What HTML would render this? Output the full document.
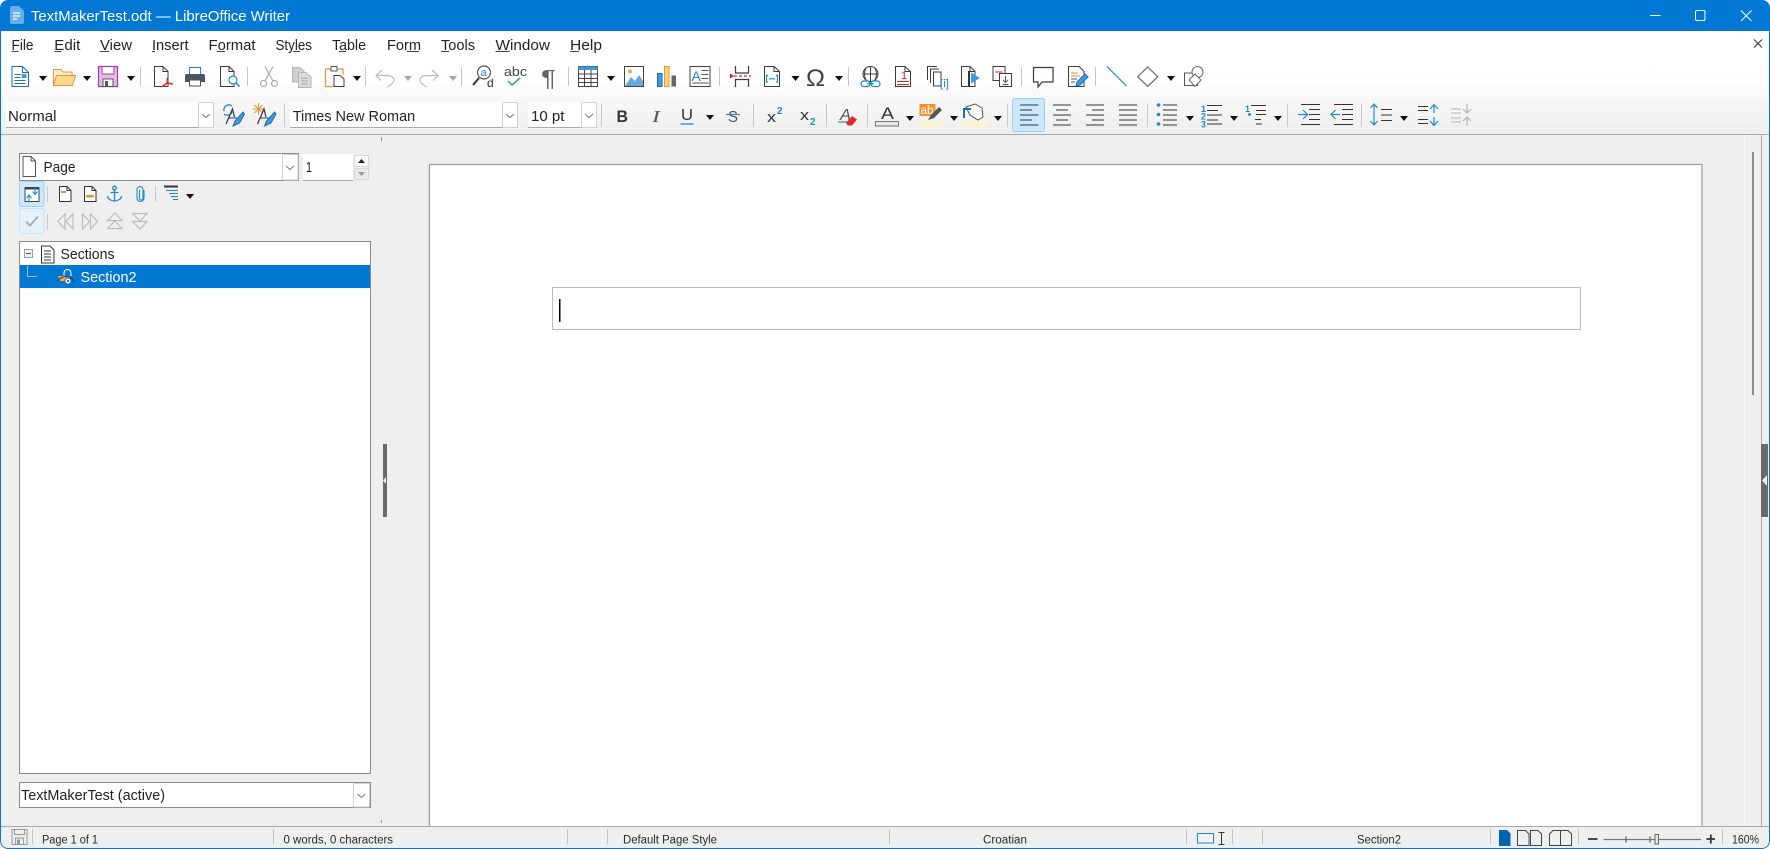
<!DOCTYPE html>
<html lang="en"><head><meta charset="utf-8"><title>TextMakerTest.odt — LibreOffice Writer</title>
<style>
html,body{margin:0;padding:0;background:#fff;width:1770px;height:849px;overflow:hidden}
svg{display:block}
text{font-family:"Liberation Sans",sans-serif;font-size:15px;fill:#222;white-space:pre}
.s{font-size:11.5px;fill:#2a2a2a}
.m{fill:#222}
.k{fill:none;stroke:#3c3c3c;stroke-width:1}
.g{fill:none;stroke:#ababab;stroke-width:1}
.b{fill:none;stroke:#1e8bcd;stroke-width:1}
.l{fill:none;stroke:#333;stroke-width:1.2}
.sep{stroke:#c8c8c8;stroke-width:1}
</style></head><body>
<svg width="1770" height="849" viewBox="0 0 1770 849" xmlns="http://www.w3.org/2000/svg">
<defs>
<linearGradient id="tb" x1="0" y1="0" x2="0" y2="1"><stop offset="0" stop-color="#fff"/><stop offset=".3" stop-color="#fefefe"/><stop offset="1" stop-color="#eeeeee"/></linearGradient>
<clipPath id="win"><rect x="0" y="0" width="1770" height="849" rx="8"/></clipPath>
<polygon id="a" points="-4,0 4,0 0,5" fill="#111"/>
<polygon id="ad" points="-4,0 4,0 0,5" fill="#a8a8a8"/>
<g id="dd"><rect x=".5" y=".5" width="15" height="25" rx="1" fill="#fff" stroke="#d2d2d2"/><path d="M4 12l4 3.5 4-3.5" fill="none" stroke="#777"/></g>
</defs>
<g clip-path="url(#win)">
<rect width="1770" height="849" fill="#efefef"/>
<rect width="1770" height="31" fill="#0078d4"/>
<rect y="31" width="1770" height="28" fill="#fff"/>
<rect y="58" width="1770" height="76" fill="url(#tb)"/>
<rect y="134" width="1770" height="1" fill="#a9a9a9"/>

<!-- title -->
<path d="M10 8a2 2 0 0 1 2-2h7l5 5v11a2 2 0 0 1-2 2H12a2 2 0 0 1-2-2Z" fill="#cfe4f7" opacity=".5"/>
<path d="M13 13h7M13 16h7M13 19h4" stroke="#fff" stroke-width="1.2"/>
<text x="31" y="21" style="fill:#fff" textLength="259" lengthAdjust="spacingAndGlyphs">TextMakerTest.odt — LibreOffice Writer</text>
<path d="M1650 15.5h10.5" stroke="#fff" stroke-width="1"/>
<rect x="1695.5" y="10.5" width="9.5" height="10" rx="1.5" fill="none" stroke="#fff"/>
<path d="M1741 10.5l10.5 10.5M1751.5 10.5l-10.5 10.5" stroke="#fff" stroke-width="1"/>

<!-- menu -->
<g class="m">
<text x="11.5" y="50" textLength="22" lengthAdjust="spacingAndGlyphs">File</text>
<text x="54.3" y="50" textLength="26" lengthAdjust="spacingAndGlyphs">Edit</text>
<text x="100" y="50" textLength="32" lengthAdjust="spacingAndGlyphs">View</text>
<text x="152" y="50" textLength="36.5" lengthAdjust="spacingAndGlyphs">Insert</text>
<text x="208.5" y="50" textLength="47" lengthAdjust="spacingAndGlyphs">Format</text>
<text x="275.5" y="50" textLength="36.5" lengthAdjust="spacingAndGlyphs">Styles</text>
<text x="332" y="50" textLength="34" lengthAdjust="spacingAndGlyphs">Table</text>
<text x="387" y="50" textLength="34" lengthAdjust="spacingAndGlyphs">Form</text>
<text x="441" y="50" textLength="34" lengthAdjust="spacingAndGlyphs">Tools</text>
<text x="495.5" y="50" textLength="54.5" lengthAdjust="spacingAndGlyphs">Window</text>
<text x="570" y="50" textLength="32" lengthAdjust="spacingAndGlyphs">Help</text>
</g>
<path d="M11.5 51.5h7M54.5 51.5h7M100 51.5h9M152 51.5h3M217 51.5h8M293 51.5h7M339 51.5h7M407 51.5h12M441 51.5h8M495.5 51.5h14M570 51.5h9" stroke="#444" stroke-width="1"/>
<path d="M1754 39.5l8 8M1762 39.5l-8 8" stroke="#333" stroke-width="1.1"/>

<!-- toolbar 1 -->
<g transform="translate(11.5,66)"><path d="M.5.5H11L17 6.5V20.5H.5Z" fill="#fff" stroke="#1f6db3"/><path d="M11 .5V6.5H17" fill="none" stroke="#1f6db3"/><path d="M3 8.5h6M3 11.5h6M3 14.5h11M3 17.5h11" stroke="#1f6db3"/><rect x="10" y="8" width="5" height="4" fill="#4a9bd8"/></g>
<use href="#a" x="43" y="76"/>
<g transform="translate(53,67)"><path d="M.5 18.5V2.5H8L10 5H19V9" stroke="#f0923b" fill="#fdeec8"/><path d="M.5 18.5L3.500 8.500H22.500L19.500 18.500Z" fill="#fbd98f" stroke="#f0923b"/></g>
<use href="#a" x="87" y="76"/>
<g transform="translate(98,66)"><path d="M.5.5H19.5V20.5H.5Z" fill="#e6bce6" stroke="#a33ea3" stroke-width="1.2"/><rect x="4" y=".5" width="12" height="7.5" fill="#fff" stroke="#a33ea3"/><rect x="5" y="13" width="10" height="7.500" fill="#fff" stroke="#555"/><rect x="7" y="15" width="3" height="5" fill="#555"/></g>
<use href="#a" x="131" y="76"/>
<path class="sep" d="M140.500 67v19"/>
<g transform="translate(154,66)"><path d="M.5.5H9L14 5.500V20.500H.5Z" class="k" style="fill:#fff"/><path d="M9 .5V5.500H14" class="k"/><path d="M13 12c1 5-2 8-5 8.500 3-3 7-4 11-2.500-4 .5-6-2-6-6Z" fill="none" stroke="#dd3333" stroke-width="1.200"/></g>
<g transform="translate(185,67)"><rect x="4.500" y=".5" width="11" height="7" fill="#fff" stroke="#1e8bcd"/><path d="M2 7H18a2 2 0 0 1 2 2V15H16V13H4V15H0V9a2 2 0 0 1 2-2Z" fill="#4b5560"/><rect x="4.500" y="13" width="11" height="6" fill="#fff" stroke="#4b5560"/></g>
<g transform="translate(220,66)"><path d="M.5.5H9L14 5.500V20.500H.5Z" class="k"/><path d="M9 .5V5.500H14" class="k"/><circle cx="13" cy="14" r="4" fill="#fff" stroke="#1e8bcd" stroke-width="1.200"/><path d="M16 17l3.500 3.500" stroke="#1e8bcd" stroke-width="1.500"/></g>
<path class="sep" d="M247.500 67v19"/>
<g transform="translate(260,66)" class="g" style="stroke-width:1.200"><circle cx="3.500" cy="17.500" r="3"/><circle cx="14.500" cy="17.500" r="3"/><path d="M5 15L13 .5M13 15L5 .5"/></g>
<g transform="translate(292,67)"><path d="M.5.5H8L12 4V15H.5Z" fill="#cfcfcf" stroke="#b5b5b5"/><path d="M6.500 5.500H14L19 10V20.500H6.500Z" fill="#dcdcdc" stroke="#b5b5b5"/><path d="M9 11h7M9 14h7M9 17h7" stroke="#aaa"/></g>
<g transform="translate(325,66)"><path d="M.5 3H18V9" fill="none" stroke="#f0923b" stroke-width="1.200"/><path d="M.5 3V20.500H8" fill="none" stroke="#f0923b" stroke-width="1.200"/><rect x="6" y=".5" width="6" height="4.500" fill="#fff" stroke="#555"/><path d="M9 9.500H15L19 13V20.500H9Z" class="k" style="fill:#fff"/></g>
<use href="#a" x="357" y="76"/>
<path class="sep" d="M365.500 67v19"/>
<path d="M382 70l-6 5.500 5 5M377 75.500H387c4 0 7 2 7 4.500 0 3-3 5-7 7" fill="none" stroke="#bdbdbd" stroke-width="1.200"/>
<use href="#ad" x="408" y="76"/>
<path d="M432 70l6 5.500-5 5M437 75.500H427c-4 0-7 2-7 4.500 0 3 3 5 7 7" fill="none" stroke="#bdbdbd" stroke-width="1.200"/>
<use href="#ad" x="453" y="76"/>
<path class="sep" d="M461.500 67v19"/>
<circle cx="484" cy="72.500" r="6.500" fill="#fff" stroke="#555" stroke-width="1.200"/>
<path d="M479 78l-6 7" stroke="#333" stroke-width="2"/>
<text x="480.500" y="76" style="font-size:11px;fill:#1e8bcd">a</text>
<text x="487" y="87" style="font-size:12px;fill:#333">d</text>
<text x="504" y="76" style="font-size:13px;fill:#444" textLength="23" lengthAdjust="spacingAndGlyphs">abc</text>
<path d="M508 81l4 4 8-7" fill="none" stroke="#3cb371" stroke-width="1.600"/>
<text x="541" y="86" style="font-size:23px;fill:#666" textLength="15" lengthAdjust="spacingAndGlyphs">¶</text>
<path class="sep" d="M568.500 67v19"/>
<g transform="translate(578,66)"><rect x=".5" y=".5" width="19" height="20" fill="#fff" stroke="#444"/><rect x=".5" y=".5" width="19" height="3.500" fill="#3f9be0"/><path d="M.5 8h19M.5 12.500h19M.5 16.500h19M6.500 4v16M13 4v16" stroke="#444"/></g>
<use href="#a" x="611" y="76"/>
<g transform="translate(624,66)"><rect x=".5" y=".5" width="19" height="20" fill="#fff" stroke="#444"/><path d="M1 20L7 11l4 4 4-6 4 6v5Z" fill="#6aa9e0"/><circle cx="6" cy="5.500" r="2" fill="#f5a54a"/></g>
<g transform="translate(657,66)"><rect x=".5" y="7.500" width="4.500" height="13" fill="#3f9be0" stroke="#1f6db3"/><rect x="7.500" y=".5" width="4.500" height="20" fill="#fcd77f" stroke="#f0923b"/><rect x="14.500" y="9.500" width="4.500" height="11" fill="#666"/></g>
<g transform="translate(689.500,66)"><rect x=".5" y=".5" width="20" height="20" fill="#fff" stroke="#444"/><text x="2" y="15" style="font-size:14px;fill:#1e8bcd">A</text><path d="M12 4.500h7M12 8.500h7M12 12.500h7M3 17h16" stroke="#555"/></g>
<path class="sep" d="M719.500 67v19"/>
<g transform="translate(730,66)"><path d="M5.500 0V7H18.500V0M5.500 21V13.500H18.500V21" class="k" style="stroke-width:1.200"/><path d="M4 10H21" stroke="#d22" stroke-dasharray="3 2" stroke-width="1.200"/><path d="M0 7.500L4 10 0 12.500Z" fill="#d22"/></g>
<g transform="translate(764,66)"><path d="M.5.5H10L15.500 5.500V20.500H.5Z" class="k"/><path d="M10 .5V5.500H15.500" class="k"/><path d="M4 9.500H2.500V16H4M12 9.500H13.500V16H12M5 12.800H11" class="b" style="stroke-width:1.200"/></g>
<use href="#a" x="795.500" y="76"/>
<text x="806" y="86" style="font-size:24px;fill:#444" textLength="19" lengthAdjust="spacingAndGlyphs">Ω</text>
<use href="#a" x="839" y="76"/>
<path class="sep" d="M848.500 67v19"/>
<g transform="translate(860,66)"><circle cx="10.500" cy="8" r="7.500" class="k"/><path d="M3 8h15M10.500.5v15M6 2c-2 4-2 8 0 12M15 2c2 4 2 8 0 12" class="k"/><rect x="1" y="15" width="9" height="5.500" rx="2.700" fill="#fff" stroke="#1e8bcd" stroke-width="1.200"/><rect x="11" y="15" width="9" height="5.500" rx="2.700" fill="#fff" stroke="#1e8bcd" stroke-width="1.200"/><path d="M7 17.700h7" stroke="#1e8bcd" stroke-width="1.200"/></g>
<g transform="translate(895,66)"><path d="M.5.5H10L15.500 5.500V20.500H.5Z" class="k"/><path d="M10 .5V5.500H15.500" class="k"/><text x="6" y="13" style="font-size:11px;fill:#d22">1</text><path d="M2 15.500H14M2 18.500H14" stroke="#d22"/></g>
<g transform="translate(927,66)"><path d="M.5 14V.5H10" class="k"/><path d="M3.500 17V3H12" class="k"/><path d="M6.500 20V6H14V20Z" fill="#fff" stroke="#3c3c3c"/><text x="13" y="21" style="font-size:11px;fill:#1e8bcd" textLength="9" lengthAdjust="spacingAndGlyphs">[i]</text></g>
<g transform="translate(961,66)"><path d="M.5.5H9L14 5.500V20.500H.5Z" class="k"/><path d="M9 .5V5.500H14" class="k"/><rect x="7" y="5" width="2" height="16" fill="#333"/><path d="M10 6.500L19 12l-9 5.500Z" fill="#3f9be0"/></g>
<g transform="translate(992.500,66)"><rect x=".5" y=".5" width="12" height="14" fill="#fff" stroke="#3c3c3c"/><rect x="7" y="7.500" width="12" height="13" fill="#fff" stroke="#3c3c3c"/><path d="M2.500 6H10" stroke="#d22"/><path d="M13 10v6M10.500 14l2.500 2.500 2.500-2.500" fill="none" stroke="#555"/><path d="M10 18.500h6" stroke="#d22"/></g>
<path class="sep" d="M1021.500 67v19"/>
<path d="M1033.500 67.500H1053V82H1042L1038 87V82H1033.500Z" class="k" style="stroke-width:1.200"/>
<g transform="translate(1068,66)"><path d="M.5.5H11L16 5.500V20.500H.5Z" class="k"/><path d="M3 7h7M3 10h9" stroke="#f0923b"/><path d="M3 13h6M3 16h4" stroke="#555"/><path d="M8 20l1-4 8-8 3 3-8 8Z" fill="#3f9be0" stroke="#1f6db3"/></g>
<path class="sep" d="M1095.500 67v19"/>
<path d="M1107 66.500L1126.500 86" stroke="#1e8bcd" stroke-width="1.200"/>
<path d="M1147.700 67l10 9.700-10 9.700-10-9.700Z" fill="none" stroke="#666" stroke-width="1.200"/>
<use href="#a" x="1171" y="76"/>
<g transform="translate(1184,66)"><rect x=".5" y="7" width="13" height="12.500" fill="#fff" stroke="#555"/><circle cx="13.500" cy="6" r="5.500" fill="#fff" stroke="#666"/><path d="M11 8l6 6-6 6.500-6-6.500Z" fill="#fff" stroke="#666"/></g>

<!-- toolbar 2 -->
<rect x="6" y="102" width="207" height="26" fill="#fff"/><path d="M6 127.500H213" stroke="#aaa"/>
<use href="#dd" x="198" y="102"/>
<text x="8" y="121" textLength="48.500" lengthAdjust="spacingAndGlyphs">Normal</text>
<g transform="translate(221,102)"><path d="M3 9a5 5 0 0 1 8-5M11 10a5 5 0 0 1-8 2" fill="none" stroke="#1e8bcd" stroke-width="1.300"/><path d="M5 22L11.500 7l2 8" class="k" style="stroke-width:1.300"/><path d="M8 16h8" class="k"/><path d="M12 24l2-5 8-9 1.500 2-5 9Z" fill="#3f9be0" stroke="#1f6db3"/></g>
<g transform="translate(252.500,102)"><path d="M2 3l8 8M10 3l-8 8M6 1v12M0 7h12" stroke="#f0923b"/><path d="M5 22L11.500 7l2 8" class="k" style="stroke-width:1.300"/><path d="M8 16h8" class="k"/><path d="M12 24l2-5 8-9 1.500 2-5 9Z" fill="#3f9be0" stroke="#1f6db3"/></g>
<path class="sep" d="M284.500 104v23"/>
<rect x="290" y="102" width="228" height="26" fill="#fff"/><path d="M290 127.500H518" stroke="#aaa"/>
<use href="#dd" x="502" y="102"/>
<text x="292.700" y="121" textLength="122.500" lengthAdjust="spacingAndGlyphs">Times New Roman</text>
<rect x="528" y="102" width="69" height="26" fill="#fff"/><path d="M528 127.500H597" stroke="#aaa"/>
<use href="#dd" x="581" y="102"/>
<text x="531" y="121" textLength="33.500" lengthAdjust="spacingAndGlyphs">10 pt</text>
<path class="sep" d="M601.500 104v23"/>
<text x="616.500" y="122" style="font-size:17px;font-weight:bold;fill:#333" textLength="11.500" lengthAdjust="spacingAndGlyphs">B</text>
<text x="652" y="122" style="font-size:17px;font-style:italic;font-family:'Liberation Serif',serif;fill:#555" textLength="8" lengthAdjust="spacingAndGlyphs">I</text>
<text x="681" y="120" style="font-size:16px;fill:#333" textLength="12" lengthAdjust="spacingAndGlyphs">U</text>
<path d="M680.500 124h13" stroke="#1e8bcd" stroke-width="1.300"/>
<use href="#a" x="710" y="115"/>
<text x="728" y="122" style="font-size:16px;fill:#555" textLength="10" lengthAdjust="spacingAndGlyphs">S</text>
<path d="M726 114.500h14" stroke="#1e8bcd" stroke-width="1.200"/>
<path class="sep" d="M753.500 104v23"/>
<text x="767" y="122" style="font-size:15px;fill:#333" textLength="9" lengthAdjust="spacingAndGlyphs">x</text>
<text x="777" y="114" style="font-size:10px;font-weight:bold;fill:#1e8bcd">2</text>
<text x="800" y="120" style="font-size:15px;fill:#333" textLength="9" lengthAdjust="spacingAndGlyphs">x</text>
<text x="810" y="125" style="font-size:10px;font-weight:bold;fill:#1e8bcd">2</text>
<path class="sep" d="M826.500 104v23"/>
<text x="840" y="120" style="font-size:16px;font-style:italic;fill:#555" textLength="11" lengthAdjust="spacingAndGlyphs">A</text>
<path d="M838 122h9" stroke="#1e8bcd" stroke-width="1.200"/>
<path d="M846 123l6-7 5 3.500-5 6h-4Z" fill="#e02b2b"/>
<path class="sep" d="M867.500 104v23"/>
<text x="881" y="119" style="font-size:17px;fill:#333" textLength="13" lengthAdjust="spacingAndGlyphs">A</text>
<rect x="875.500" y="121.500" width="23" height="4.500" fill="#e8e8e8" stroke="#777"/>
<use href="#a" x="910" y="116"/>
<rect x="919.500" y="104" width="16" height="12" fill="#f7922e"/>
<text x="920.500" y="114" style="font-size:11.500px;fill:#fff" textLength="13" lengthAdjust="spacingAndGlyphs">ab</text>
<rect x="919" y="121" width="24" height="6" fill="#faf6cf"/>
<path d="M928 120l3-5 8-8 3 3-8 8Z" fill="#555"/>
<use href="#a" x="954" y="116"/>
<rect x="963" y="121" width="24" height="6" fill="#faf6cf"/>
<path d="M966 107l9-3 7 4 1 9-5 3-8-5Z" fill="#fff" stroke="#555"/>
<path d="M964 118V109h7" fill="none" stroke="#1f6db3" stroke-width="2"/>
<use href="#a" x="998" y="116"/>
<path class="sep" d="M1007.500 104v23"/>
<rect x="1012.500" y="98.500" width="32" height="33" rx="2" fill="#cce8ff" stroke="#99d1ff"/>
<path d="M1020 105h18.500M1020 110h12M1020 115h18.500M1020 120h12M1020 125h18.500" stroke="#333" stroke-width="1.100"/>
<path d="M1053 105h18M1056 110h12M1053 115h18M1056 120h12M1053 125h18" stroke="#333" stroke-width="1.100"/>
<path d="M1086 105h18M1092 110h12M1086 115h18M1092 120h12M1086 125h18" stroke="#333" stroke-width="1.100"/>
<path d="M1119 105h18M1119 110h18M1119 115h18M1119 120h18M1119 125h18" stroke="#333" stroke-width="1.100"/>
<path class="sep" d="M1147.500 104v23"/>
<path d="M1163 105h14M1163 110h14M1163 115h14M1163 120h14M1163 125h14" stroke="#333" stroke-width="1.100"/>
<circle cx="1158.500" cy="105" r="1.800" fill="#1e8bcd"/><circle cx="1158.500" cy="114.500" r="1.800" fill="#1e8bcd"/><circle cx="1158.500" cy="124" r="1.800" fill="#1e8bcd"/>
<use href="#a" x="1190" y="116"/>
<text x="1201" y="112" style="font-size:9px;font-weight:bold;fill:#1e8bcd">1</text><text x="1201" y="119.500" style="font-size:9px;font-weight:bold;fill:#1e8bcd">2</text><text x="1201" y="127.500" style="font-size:9px;font-weight:bold;fill:#1e8bcd">3</text>
<path d="M1207 105.500h15M1207 110.500h11M1207 115h15M1207 120h11M1207 124h15" stroke="#333" stroke-width="1.100"/>
<use href="#a" x="1234" y="116"/>
<text x="1245" y="112" style="font-size:9px;font-weight:bold;fill:#1e8bcd">1</text>
<path d="M1251 105.500h15M1256 110.500h10M1255 119.500h6M1256 114.500h10M1256 124h6" stroke="#333" stroke-width="1.100"/>
<circle cx="1249.500" cy="114.500" r="1.500" fill="#1e8bcd"/>
<use href="#a" x="1278" y="116"/>
<path class="sep" d="M1287.500 104v23"/>
<path d="M1301 104.500h19M1309 109.500h11M1309 114.500h11M1309 119.500h11M1301 124.500h19" stroke="#333" stroke-width="1.100"/>
<path d="M1298 114.500h9M1303 110l4.500 4.500-4.500 4.500" fill="none" stroke="#1e8bcd" stroke-width="1.200"/>
<path d="M1334 104.500h19M1342 109.500h11M1342 114.500h11M1342 119.500h11M1334 124.500h19" stroke="#333" stroke-width="1.100"/>
<path d="M1340 114.500h-9M1335.500 110l-4.500 4.500 4.500 4.500" fill="none" stroke="#1e8bcd" stroke-width="1.200"/>
<path class="sep" d="M1361.500 104v23"/>
<path d="M1374 104v21M1370.500 108l3.500-4 3.500 4M1370.500 121l3.500 4 3.500-4" fill="none" stroke="#1e8bcd" stroke-width="1.200"/>
<path d="M1381 109.500h11M1381 115h11M1381 120.500h11" stroke="#333" stroke-width="1.100"/>
<use href="#a" x="1404" y="116"/>
<path d="M1418 106.500h10M1418 110.500h10M1418 119.500h10M1418 123.500h10" stroke="#333" stroke-width="1.100"/>
<path d="M1434 113V105M1430 109l4-4.500 4 4.500M1434 117v8M1430 121l4 4.500 4-4.500" fill="none" stroke="#1e8bcd" stroke-width="1.200"/>
<path d="M1451 109h10M1451 113h10M1451 118h10M1451 122h10" stroke="#b5b5b5" stroke-width="1.100"/>
<path d="M1467 104v9M1463 109l4 4 4-4M1467 126v-9M1463 121l4-4 4 4" fill="none" stroke="#b5b5b5" stroke-width="1.200"/>

<!-- sidebar -->
<path d="M381.500 137v4M381.500 820v3" stroke="#999"/>
<rect x="19.500" y="153.500" width="279" height="27" fill="#fff" stroke="#8c8c8c"/>
<g transform="translate(282,154)"><rect x=".5" y=".5" width="15.500" height="25.500" rx="1" fill="#fff" stroke="#d2d2d2"/><path d="M4 12l4 3.500 4-3.500" fill="none" stroke="#777"/></g>
<path d="M23 156.500H31L35.500 161V176.500H23Z" fill="#fff" stroke="#555"/><path d="M31 156.500V161H35.500" fill="none" stroke="#555"/>
<text x="43.500" y="172" textLength="32" lengthAdjust="spacingAndGlyphs">Page</text>
<rect x="303" y="154" width="67" height="27" fill="#fff"/><path d="M303 180.500H370" stroke="#aaa"/>
<rect x="353" y="154" width="17" height="27" fill="#eeeeee"/>
<rect x="354.500" y="155.500" width="14" height="11" fill="#fbfbfb" stroke="#d8d8d8"/><polygon points="358,163 365,163 361.500,159" fill="#222"/>
<rect x="354.500" y="168.500" width="14" height="11" fill="#eaeaea" stroke="#d8d8d8"/><polygon points="358,172 365,172 361.500,176" fill="#999"/>
<text x="306" y="172" textLength="6" lengthAdjust="spacingAndGlyphs">1</text>

<rect x="19.500" y="181.500" width="24.500" height="25" rx="2" fill="#cce8ff" stroke="#99d1ff"/>
<rect x="25" y="187.500" width="14" height="14" fill="#fff" stroke="#444"/><rect x="25" y="187" width="14" height="2.500" fill="#444"/>
<path d="M35 188v6M32.500 191.500l2.500 3 2.500-3M29 201.500v-6M26.500 198l2.500-3 2.500 3" fill="none" stroke="#1e8bcd" stroke-width="1.100"/>
<path class="sep" d="M47.500 186v16"/>
<path d="M59.500 186.500H67L71 190.500V201.500H59.500Z" fill="#fff" stroke="#333"/><path d="M67 186.500V190.500H71" fill="none" stroke="#333"/><rect x="61" y="191" width="5" height="2" fill="#f0923b"/>
<path d="M84.500 186.500H92L96 190.500V201.500H84.500Z" fill="#fff" stroke="#333"/><path d="M92 186.500V190.500H96" fill="none" stroke="#333"/><rect x="86" y="195" width="8" height="2.500" fill="#f0923b"/>
<g class="b" style="stroke-width:1.300"><circle cx="114.500" cy="188" r="1.800"/><path d="M114.500 190V201M110.500 192.500h8M107.500 196c0 3 4 5 7 5s7-2 7-5"/></g>
<path d="M144 190v8c0 2-1.500 3.500-3.500 3.500s-3.500-1.500-3.500-3.500v-8c0-2 1.200-3.500 3-3.500s3 1.500 3 3.500v8c0 1-.7 2-1.800 2s-1.700-1-1.700-2v-8" fill="none" stroke="#1e8bcd" stroke-width="1.100"/>
<path class="sep" d="M155.500 186v16"/>
<path d="M164 186.500h14" stroke="#333" stroke-width="2"/><path d="M166 190.500h12M169 193.500h9M171 196.500h7M173 199.500h5" stroke="#1e8bcd" stroke-width="1.100"/>
<use href="#a" x="190" y="194"/>

<rect x="19.500" y="208.500" width="24.500" height="25" rx="2" fill="#e5f1fb" stroke="#cce4f7"/>
<path d="M26 221.500l4 4 8-9" fill="none" stroke="#b0b0b0" stroke-width="2"/>
<path class="sep" d="M47.500 214v16"/>
<g fill="none" stroke="#bdbdbd" stroke-width="1.200"><path d="M65 214l-7 7.500 7 7.500ZM73 214l-7 7.500 7 7.500Z"/><path d="M82.500 214l7 7.500-7 7.500ZM90.500 214l7 7.500-7 7.500Z"/><path d="M115 213l7 7.500h-14.500ZM115 221l7 7.500h-14.500Z"/><path d="M140 229l7-7.500h-14.500ZM140 221l7-7.500h-14.500Z"/></g>

<!-- navigator list -->
<rect x="19.500" y="241.500" width="351" height="532" fill="#fff" stroke="#8c8c8c"/>
<rect x="20" y="265" width="350" height="23" fill="#0078d4"/>
<rect x="24.500" y="249.500" width="8" height="8" fill="#eef" stroke="#9a9aaa"/><path d="M26 253.500h5" stroke="#555"/>
<path d="M27.500 266v10.500H37" fill="none" stroke="#9cc2dd"/>
<path d="M41.500 246H50L54 250V263H41.500Z" fill="#fff" stroke="#333"/><path d="M44 251h7M44 254h7M44 257h7M44 260h7" stroke="#333"/>
<text x="60.500" y="259" textLength="54" lengthAdjust="spacingAndGlyphs">Sections</text>
<path d="M58 276h12v5H60Z" fill="#f5a54a"/>
<path d="M64 276v-3a3.500 3.500 0 0 1 7 0v3" fill="none" stroke="#fff"/>
<path d="M58 281c4-6 12-6 16 0" fill="none" stroke="#333"/>
<circle cx="68" cy="281" r="3" fill="#fff" stroke="#1f6db3"/><circle cx="68" cy="281" r="1.200" fill="#1f6db3"/>
<text x="80.500" y="282" style="fill:#fff" textLength="56" lengthAdjust="spacingAndGlyphs">Section2</text>

<rect x="19.500" y="782.500" width="351" height="25" fill="#fff" stroke="#8c8c8c"/>
<g transform="translate(353,783)"><rect x=".5" y=".5" width="16" height="23.500" rx="1" fill="#fff" stroke="#d2d2d2"/><path d="M4.500 11l4 3.500 4-3.500" fill="none" stroke="#777"/></g>
<text x="21" y="800" textLength="144" lengthAdjust="spacingAndGlyphs">TextMakerTest (active)</text>

<rect x="383" y="444" width="4" height="73" fill="#6a6a6a"/>
<polygon points="386,477 383,480.500 386,484" fill="#eee"/>

<!-- page -->
<rect x="429.500" y="164.500" width="1272.500" height="680" fill="#fff" stroke="#9e9e9e" stroke-width="1.200"/>
<path d="M428 165v662" stroke="#e0e0e0"/>
<rect x="552.500" y="287.500" width="1028" height="42" fill="#fff" stroke="#bcbcbc"/>
<rect x="559" y="299" width="1.500" height="23" fill="#000"/>

<!-- right -->
<path d="M1744.500 135v691" stroke="#fbfbfb"/>
<rect x="1752" y="152" width="2" height="243" fill="#8a8a8a"/>
<path d="M1761.500 135v691" stroke="#adadad"/>
<rect x="1761" y="444" width="7" height="73" fill="#6a6a6a"/>
<polygon points="1767,475 1762,480.500 1767,486" fill="#eee"/>

<!-- status -->
<rect y="826" width="1770" height="23" fill="#efefef"/>
<rect y="826" width="1770" height="1" fill="#a9a9a9"/>
<path d="M32.500 829v15M273.500 829v15M567.500 829v15M607.500 829v15M889.500 829v15M1186.500 829v15M1232.500 829v15M1262.500 829v15M1490.500 829v15M1578.500 829v15M1722.500 829v15" stroke="#c4c4c4"/>
<g transform="translate(11.500,829)" fill="none" stroke="#9a9a9a"><rect x=".5" y=".5" width="15" height="15"/><rect x="3" y=".5" width="10" height="5"/><rect x="4" y="9" width="8" height="6.500"/><rect x="6" y="11" width="2" height="4" fill="#9a9a9a"/></g>
<text class="s" x="42" y="843.500" textLength="56" lengthAdjust="spacingAndGlyphs">Page 1 of 1</text>
<text class="s" x="283.500" y="843.500" textLength="109.500" lengthAdjust="spacingAndGlyphs">0 words, 0 characters</text>
<text class="s" x="623" y="843.500" textLength="94" lengthAdjust="spacingAndGlyphs">Default Page Style</text>
<text class="s" x="983" y="843.500" textLength="44" lengthAdjust="spacingAndGlyphs">Croatian</text>
<text class="s" x="1357" y="843.500" textLength="44" lengthAdjust="spacingAndGlyphs">Section2</text>
<text class="s" x="1732" y="843.500" textLength="27" lengthAdjust="spacingAndGlyphs">160%</text>
<rect x="1197.500" y="833.500" width="16" height="9.500" fill="#fff" fill-opacity=".3" stroke="#1e8bcd"/>
<path d="M1221.500 832.500v12M1218.500 832.500h6M1218.500 844.500h6" stroke="#333"/>
<path d="M1499 830H1507L1510.500 833.500V846H1499Z" fill="#0063b1"/>
<path d="M1517.500 830.500H1525.500L1529 834V845.500H1517.500Z" fill="none" stroke="#444"/><path d="M1530.500 830.500H1538L1541.500 834V845.500H1530.500Z" fill="none" stroke="#444"/>
<path d="M1560.500 830.500H1553L1549.500 834V845.500H1560.500ZM1560.500 830.500H1568L1571.500 834V845.500H1560.500Z" fill="none" stroke="#444"/>
<path d="M1588 839h9.500M1706.500 839h8.500M1710.800 834.500v9" stroke="#333" stroke-width="1.800"/>
<path d="M1603.500 839.500H1701" stroke="#777" stroke-width="1.200"/>
<path d="M1626 836.500v6M1650 836.500v6" stroke="#777" stroke-width="1.500"/>
<rect x="1655" y="834.500" width="3.500" height="9.500" fill="#e8e8e8" stroke="#666"/>

<!-- window frame -->
<path d="M.5 31V841a7.500 7.500 0 0 0 7.500 7.500H1762a7.500 7.500 0 0 0 7.500-7.500V31" fill="none" stroke="#0078d4" stroke-width="1"/>
</g>
</svg>
</body></html>
